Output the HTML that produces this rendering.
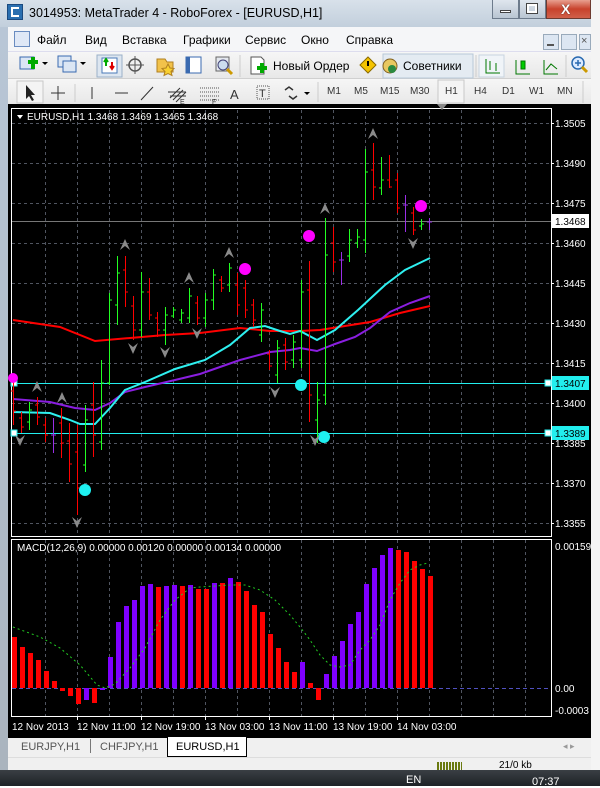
<!DOCTYPE html>
<html><head><meta charset="utf-8"><style>
*{margin:0;padding:0;box-sizing:border-box}
body{width:600px;height:786px;overflow:hidden;background:#fff;position:relative;font-family:"Liberation Sans",sans-serif}
.a{position:absolute}
.t{font-size:12px;color:#000;white-space:nowrap}
.tf{font-size:10px;color:#333;white-space:nowrap}
</style></head><body>
<!-- left window frame -->
<div class="a" style="left:0;top:0;width:591px;height:770px;background:linear-gradient(#c4d0de,#b8c6d6 30px,#aab4be)"></div>
<div class="a" style="left:0;top:0;width:591px;height:27px;background:linear-gradient(#d8e1ea,#c2cfdc)"></div>
<div class="a" style="left:7px;top:4px;width:16px;height:16px;background:#2a6fb0;border:1px solid #1a4a80"></div>
<div class="a" style="left:11px;top:7px;width:8px;height:10px;border:2px solid #fff;border-right:none"></div>
<div class="a t" style="left:29px;top:6px;font-size:12.5px">3014953: MetaTrader 4 - RoboForex - [EURUSD,H1]</div>
<div class="a" style="left:492px;top:0;width:27px;height:19px;background:linear-gradient(#dfe6ee,#b9c5d2);border:1px solid #6d7b8c;border-top:none"></div>
<div class="a" style="left:500px;top:10px;width:11px;height:3px;background:#fff;border:1px solid #444"></div>
<div class="a" style="left:519px;top:0;width:27px;height:19px;background:linear-gradient(#dfe6ee,#b9c5d2);border:1px solid #6d7b8c;border-top:none"></div>
<div class="a" style="left:527px;top:4px;width:10px;height:9px;border:2px solid #fff;outline:1px solid #444"></div>
<div class="a" style="left:546px;top:0;width:45px;height:19px;background:linear-gradient(#e8a090,#c8422c 50%,#d0604a);border:1px solid #6d3a30;border-top:none"></div>
<div class="a" style="left:561px;top:1px;color:#fff;font-size:14px;font-weight:bold;text-shadow:0 0 1px #000">X</div>
<!-- menu -->
<div class="a" style="left:8px;top:27px;width:583px;height:25px;background:#f5f6f8;border-bottom:1px solid #dde"></div>
<div class="a" style="left:14px;top:31px;width:16px;height:16px;border:1px solid #6a8cc0;background:#dfe8f6"></div>
<div class="a t" style="left:37px;top:33px">Файл</div>
<div class="a t" style="left:85px;top:33px">Вид</div>
<div class="a t" style="left:122px;top:33px">Вставка</div>
<div class="a t" style="left:183px;top:33px">Графики</div>
<div class="a t" style="left:245px;top:33px">Сервис</div>
<div class="a t" style="left:301px;top:33px">Окно</div>
<div class="a t" style="left:346px;top:33px">Справка</div>
<div class="a" style="left:543px;top:34px;width:16px;height:16px;background:#dce6f2;border:1px solid #9ab"></div>
<div class="a" style="left:561px;top:34px;width:16px;height:16px;background:#dce6f2;border:1px solid #9ab"></div>
<div class="a" style="left:579px;top:34px;width:12px;height:16px;background:#dce6f2;border:1px solid #9ab"></div>
<div class="a" style="left:547px;top:44px;width:7px;height:2px;background:#555"></div>
<div class="a" style="left:581px;top:35px;font-size:11px;color:#555">×</div>
<!-- toolbar 1 -->
<div class="a" style="left:8px;top:52px;width:583px;height:27px;background:linear-gradient(#f6f6f6,#e8e8e8);border-bottom:1px solid #d0d0d0"></div>
<div class="a" style="left:8px;top:79px;width:583px;height:25px;background:linear-gradient(#f6f6f6,#e8e8e8)"></div>
<svg class="a" style="left:0;top:52px" width="600" height="52">
<g fill="none" stroke-width="1">
<rect x="20" y="5" width="14" height="12" fill="#dbe6f4" stroke="#3a6ab0"/>
<path d="M28 10h10M33 5v12" stroke="#0a0" stroke-width="4"/>
<path d="M42 10l3 3 3-3z" fill="#000"/>
<rect x="58" y="4" width="13" height="11" fill="#dbe6f4" stroke="#3a6ab0"/>
<rect x="63" y="9" width="13" height="11" fill="#dbe6f4" stroke="#3a6ab0"/>
<path d="M80 10l3 3 3-3z" fill="#000"/>
<rect x="97" y="3" width="25" height="22" fill="#dde6f0" stroke="#9ab0c8"/>
<rect x="102" y="6" width="15" height="15" fill="#fff" stroke="#4a7ab8"/>
<path d="M106 14v-6M104 10l2-3 2 3" stroke="#0a0" stroke-width="2"/>
<path d="M112 10v6M110 14l2 3 2-3" stroke="#d00" stroke-width="2"/>
<circle cx="135" cy="13" r="6" stroke="#555" stroke-width="1.5"/>
<path d="M135 4v18M126 13h18" stroke="#555"/>
<path d="M157 7h8l2 3h6v10h-16z" fill="#f2c24a" stroke="#b08020"/>
<path d="M168 12l2 4 4 .5-3 3 1 4-4-2-4 2 1-4-3-3 4-.5z" fill="#f8d030" stroke="#b08020"/>
<rect x="186" y="5" width="15" height="16" fill="#fff" stroke="#3a6ab0"/>
<path d="M186 5h4v16h-4z" fill="#3a6ab0"/>
<rect x="216" y="5" width="13" height="14" fill="#e4e8ee" stroke="#666"/>
<circle cx="223" cy="13" r="5" fill="#cde" stroke="#447"/>
<path d="M227 17l5 5" stroke="#c90" stroke-width="3"/>
<path d="M240 3v22" stroke="#ccc"/>
<path d="M251 5h10l3 3v14h-13z" fill="#fff" stroke="#555"/>
<path d="M257 16h10M262 11v10" stroke="#0a0" stroke-width="4"/>
<path d="M368 5l8 8-8 8-8-8z" fill="#f5c400" stroke="#8a6a00"/>
<path d="M368 9v5" stroke="#000" stroke-width="2"/>
<rect x="383" y="2" width="90" height="24" fill="#e4ebf2" stroke="#b8c8d8"/>
<ellipse cx="390" cy="14" rx="7" ry="7" fill="#e8c860" stroke="#806020"/>
<circle cx="392" cy="17" r="4" fill="#2a8a40"/>
<path d="M476 3v22" stroke="#ccc"/>
<rect x="479" y="3" width="25" height="22" fill="#f0f4f8" stroke="#c8d4e0"/>
<path d="M486 7v14h14M490 9v9M496 11v8" stroke="#070"/>
<path d="M516 8v14h14" stroke="#070"/><rect x="521" y="9" width="4" height="8" fill="#0c0" stroke="#070"/>
<path d="M544 8v14h14M546 18l5-6 6 5" stroke="#070"/>
<path d="M566 3v22" stroke="#ccc"/>
<circle cx="578" cy="11" r="6" fill="#dbeaff" stroke="#2a6ab0" stroke-width="1.5"/>
<path d="M575 11h6M578 8v6" stroke="#2a6ab0" stroke-width="1.5"/>
<path d="M582 15l5 5" stroke="#c90" stroke-width="3"/>
<!-- toolbar2 -->
<rect x="17" y="29" width="26" height="22" fill="#f4f4f4" stroke="#c8c8c8"/>
<path d="M26 33v14l3-3 3 5 2-1-3-5h4z" fill="#222"/>
<path d="M51 41h14M58 34v14" stroke="#333"/>
<path d="M75 32v18" stroke="#ccc"/>
<path d="M92 35v12M115 41h13M141 48l12-13" stroke="#333"/>
<path d="M170 46l10-10M173 48l10-10M176 50l10-10M168 40h18M170 44h16" stroke="#333"/>
<text x="180" y="52" font-size="7" fill="#333" font-family="Liberation Sans">E</text>
<path d="M200 36h20M200 40h20M200 44h20M200 48h20" stroke="#555" stroke-dasharray="1,1"/>
<text x="212" y="52" font-size="7" fill="#333" font-family="Liberation Sans">F</text>
<text x="230" y="47" font-size="13" fill="#333" font-family="Liberation Sans">A</text>
<rect x="257" y="34" width="12" height="13" stroke="#555" stroke-dasharray="1,1"/>
<text x="259" y="45" font-size="11" fill="#333" font-family="Liberation Sans">T</text>
<path d="M285 38l4-3 4 3M289 44l4 3 4-3" stroke="#333" stroke-width="1.5"/>
<path d="M304 40l3 3 3-3z" fill="#000"/>
<path d="M318 30v20" stroke="#ccc"/>
<rect x="438" y="28" width="26" height="23" fill="#f4f4f4" stroke="#c8c8c8"/>
<path d="M583 29v22" stroke="#ccc"/>
</g></svg>
<div class="a t" style="left:273px;top:59px">Новый Ордер</div>
<div class="a t" style="left:403px;top:59px">Советники</div>
<div class="a tf" style="left:327px;top:86px">M1</div>
<div class="a tf" style="left:354px;top:86px">M5</div>
<div class="a tf" style="left:380px;top:86px">M15</div>
<div class="a tf" style="left:410px;top:86px">M30</div>
<div class="a tf" style="left:445px;top:86px">H1</div>
<div class="a tf" style="left:474px;top:86px">H4</div>
<div class="a tf" style="left:502px;top:86px">D1</div>
<div class="a tf" style="left:529px;top:86px">W1</div>
<div class="a tf" style="left:557px;top:86px">MN</div>
<!-- chart -->
<svg class="a" style="left:0;top:0" width="600" height="786" font-family="Liberation Sans">
<rect x="8" y="104" width="583" height="633" fill="#000"/>
<g stroke="#505560" stroke-dasharray="3,3" stroke-width="1">
<path d="M45.5 110V536M77.5 110V536M109.5 110V536M141.5 110V536M173.5 110V536M205.5 110V536M237.5 110V536M269.5 110V536M301.5 110V536M333.5 110V536M365.5 110V536M397.5 110V536M429.5 110V536M461.5 110V536M493.5 110V536M525.5 110V536"/>
<path d="M45.5 540V716M77.5 540V716M109.5 540V716M141.5 540V716M173.5 540V716M205.5 540V716M237.5 540V716M269.5 540V716M301.5 540V716M333.5 540V716M365.5 540V716M397.5 540V716M429.5 540V716M461.5 540V716M493.5 540V716M525.5 540V716"/>
<path d="M12 123.5H551M12 163.5H551M12 203.5H551M12 243.5H551M12 283.5H551M12 323.5H551M12 363.5H551M12 403.5H551M12 443.5H551M12 483.5H551M12 523.5H551"/>
</g>
<rect x="11.5" y="108.5" width="540" height="428" fill="none" stroke="#fff"/>
<rect x="11.5" y="539.5" width="540" height="177" fill="none" stroke="#fff"/>
<path d="M12 221.5H551" stroke="#777"/>
<path d="M12 383.5H551M12 433.5H551" stroke="#2ee"/>
<rect x="11" y="380" width="6" height="6" fill="#fff" stroke="#2ee"/>
<rect x="11" y="430" width="6" height="6" fill="#fff" stroke="#2ee"/>
<rect x="545" y="380" width="6" height="6" fill="#fff" stroke="#2ee"/>
<rect x="545" y="430" width="6" height="6" fill="#fff" stroke="#2ee"/>
<!-- MAs -->
<g fill="none" stroke-width="2">
<polyline stroke="#f00" points="13,320 60,327 95,341 130,338 165,335 200,333 240,328 270,331 300,331 320,330 345,326 370,322 400,313 430,306"/>
<polyline stroke="#8a1ee0" points="13,399 50,402 75,408 95,410 110,403 125,392 145,387 175,380 200,374 240,360 270,352 290,350 300,348 317,351 335,344 355,337 370,328 390,312 410,303 430,296"/>
<polyline stroke="#2ef0f0" points="13,412 50,413 70,420 80,424 95,424 110,408 125,390 145,382 175,369 205,360 230,345 250,328 265,326 280,331 290,334 300,331 317,340 335,330 358,310 385,285 405,270 430,258"/>
</g>
<!-- bars -->
<g stroke-width="1" fill="none">
<path stroke="#f00" d="M13.5 377V425M11 391h2.5M13.5 411h2.5M21.5 412V433M19 418h2.5M21.5 427h2.5M37.5 397V425M35 405h2.5M37.5 417h2.5M45.5 418V442M43 425h2.5M45.5 435h2.5M61.5 408V458M59 423h2.5M61.5 443h2.5M69.5 423V482M67 441h2.5M69.5 464h2.5M77.5 425V515M75 452h2.5M77.5 488h2.5M93.5 382V457M91 405h2.5M93.5 435h2.5M125.5 256V307M123 270h2.5M125.5 292h2.5M133.5 296V340M131 306h2.5M133.5 330h2.5M149.5 278V320M147 292h2.5M149.5 315h2.5M157.5 312V337M155 318h2.5M157.5 330h2.5M197.5 296V325M195 303h2.5M197.5 318h2.5M221.5 276V292M219 280h2.5M221.5 288h2.5M237.5 273V315M235 285h2.5M237.5 305h2.5M245.5 280V318M243 288h2.5M245.5 310h2.5M253.5 299V327M251 305h2.5M253.5 320h2.5M269.5 350V370M267 354h2.5M269.5 366h2.5M285.5 338V370M283 345h2.5M285.5 362h2.5M309.5 261V422M307 290h2.5M309.5 395h2.5M333.5 227V272M331 243h2.5M333.5 262h2.5M373.5 143V200M371 170h2.5M373.5 187h2.5M389.5 155V188M387 180h2.5M389.5 187h2.5M397.5 173V213M395 180h2.5M397.5 208h2.5M413.5 207V235M411 213h2.5M413.5 230h2.5"/>
<path stroke="#2f2" d="M29.5 402V430M27 422h2.5M29.5 410h2.5M85.5 405V472M83 465h2.5M85.5 420h2.5M101.5 360V450M99 442h2.5M101.5 383h2.5M109.5 293V385M107 383h2.5M109.5 300h2.5M117.5 256V325M115 305h2.5M117.5 273h2.5M141.5 272V337M139 330h2.5M141.5 292h2.5M165.5 307V345M163 330h2.5M165.5 315h2.5M173.5 307V318M171 316h2.5M173.5 310h2.5M181.5 309V323M179 320h2.5M181.5 313h2.5M189.5 288V323M187 318h2.5M189.5 296h2.5M205.5 293V327M203 318h2.5M205.5 300h2.5M213.5 269V310M211 300h2.5M213.5 275h2.5M229.5 263V292M227 285h2.5M229.5 268h2.5M261.5 303V342M259 335h2.5M261.5 310h2.5M277.5 340V383M275 375h2.5M277.5 348h2.5M293.5 335V368M291 360h2.5M293.5 342h2.5M301.5 280V368M299 360h2.5M301.5 292h2.5M317.5 382V443M315 420h2.5M317.5 400h2.5M325.5 218V405M323 395h2.5M325.5 255h2.5M349.5 229V262M347 256h2.5M349.5 240h2.5M357.5 229V248M355 243h2.5M357.5 237h2.5M365.5 149V253M363 240h2.5M365.5 172h2.5M381.5 157V195M379 188h2.5M381.5 180h2.5M421.5 219V230M419 226h2.5M421.5 224h2.5"/>
<path stroke="#9a2ee8" d="M53.5 418V453M51 435h5M341.5 252V285M339 260h5M405.5 195V232M403 205h5M429.5 218V230M427 222h5"/>
</g>
<!-- dots -->
<g>
<circle cx="245" cy="269" r="6" fill="#f0f"/><circle cx="309" cy="236" r="6" fill="#f0f"/><circle cx="421" cy="206" r="6" fill="#f0f"/><circle cx="13" cy="378" r="5" fill="#f0f"/>
<circle cx="85" cy="490" r="6" fill="#1ef0f0"/><circle cx="301" cy="385" r="6" fill="#1ef0f0"/><circle cx="324" cy="437" r="6" fill="#1ef0f0"/>
</g>
<!-- arrows -->
<g fill="#8a8a8a">
<path d="M120 250l5-11 5 11-5-4z"/><path d="M32 392l5-11 5 11-5-4z"/><path d="M57 403l5-11 5 11-5-4z"/><path d="M184 283l5-11 5 11-5-4z"/><path d="M224 258l5-11 5 11-5-4z"/><path d="M368 139l5-11 5 11-5-4z"/><path d="M320 214l5-11 5 11-5-4z"/>
<path d="M15 435l5 11 5-11-5 4z"/><path d="M128 343l5 11 5-11-5 4z"/><path d="M160 347l5 11 5-11-5 4z"/><path d="M192 328l5 11 5-11-5 4z"/><path d="M72 517l5 11 5-11-5 4z"/><path d="M270 387l5 11 5-11-5 4z"/><path d="M408 238l5 11 5-11-5 4z"/><path d="M310 435l5 11 5-11-5 4z"/><path d="M437 104l5 6 5-6z"/>
</g>
<!-- MACD -->
<path d="M12 688.5H551" stroke="#5050c0" stroke-dasharray="4,3"/>
<g fill="#f00">
<rect x="12" y="637" width="5" height="51"/><rect x="20" y="647" width="5" height="41"/><rect x="28" y="653" width="5" height="35"/><rect x="36" y="660" width="5" height="28"/><rect x="44" y="671" width="5" height="17"/><rect x="52" y="681" width="5" height="7"/><rect x="60" y="688" width="5" height="3"/><rect x="68" y="688" width="5" height="8"/><rect x="76" y="688" width="5" height="16"/><rect x="92" y="688" width="5" height="15"/>
<rect x="156" y="587" width="5" height="101"/><rect x="180" y="586" width="5" height="102"/><rect x="196" y="589" width="5" height="99"/><rect x="204" y="589" width="5" height="99"/><rect x="220" y="583" width="5" height="105"/><rect x="236" y="582" width="5" height="106"/><rect x="244" y="591" width="5" height="97"/><rect x="252" y="605" width="5" height="83"/><rect x="260" y="612" width="5" height="76"/><rect x="268" y="634" width="5" height="54"/><rect x="276" y="648" width="5" height="40"/><rect x="284" y="662" width="5" height="26"/><rect x="292" y="672" width="5" height="16"/><rect x="308" y="683" width="5" height="5"/><rect x="316" y="688" width="5" height="12"/>
<rect x="396" y="550" width="5" height="138"/><rect x="404" y="552" width="5" height="136"/><rect x="412" y="561" width="5" height="127"/><rect x="420" y="569" width="5" height="119"/><rect x="428" y="576" width="5" height="112"/>
</g>
<g fill="#7f00ff">
<rect x="84" y="688" width="5" height="12"/><rect x="100" y="688" width="5" height="2"/><rect x="108" y="657" width="5" height="31"/><rect x="116" y="622" width="5" height="66"/><rect x="124" y="606" width="5" height="82"/><rect x="132" y="600" width="5" height="88"/><rect x="140" y="586" width="5" height="102"/><rect x="148" y="584" width="5" height="104"/><rect x="164" y="586" width="5" height="102"/><rect x="172" y="585" width="5" height="103"/><rect x="188" y="585" width="5" height="103"/><rect x="212" y="583" width="5" height="105"/><rect x="228" y="578" width="5" height="110"/><rect x="300" y="662" width="5" height="26"/>
<rect x="324" y="674" width="5" height="14"/><rect x="332" y="656" width="5" height="32"/><rect x="340" y="641" width="5" height="47"/><rect x="348" y="624" width="5" height="64"/><rect x="356" y="612" width="5" height="76"/><rect x="364" y="584" width="5" height="104"/><rect x="372" y="568" width="5" height="120"/><rect x="380" y="555" width="5" height="133"/><rect x="388" y="548" width="5" height="140"/>
</g>
<polyline fill="none" stroke="#22cc22" stroke-dasharray="2,3" points="13,627 40,637 60,648 80,665 97,685 105,688 115,684 130,668 145,648 160,620 175,600 190,588 200,587 230,585 245,585 260,590 275,600 290,615 300,627 310,640 320,655 330,665 340,667 350,665 360,650 370,640 380,625 390,600 400,583 410,570 420,565 428,563"/>
<!-- labels -->
<g fill="#fff" font-size="10">
<path d="M17 115l3 4 3-4z" fill="#fff"/>
<text x="27" y="120">EURUSD,H1  1.3468 1.3469 1.3465 1.3468</text>
<text x="17" y="551">MACD(12,26,9) 0.00000 0.00120 0.00000 0.00134 0.00000</text>
<text x="555" y="127">1.3505</text><text x="555" y="167">1.3490</text><text x="555" y="207">1.3475</text><text x="555" y="247">1.3460</text><text x="555" y="287">1.3445</text><text x="555" y="327">1.3430</text><text x="555" y="367">1.3415</text><text x="555" y="407">1.3400</text><text x="555" y="447">1.3385</text><text x="555" y="487">1.3370</text><text x="555" y="527">1.3355</text>
<text x="555" y="550">0.00159</text><text x="555" y="692">0.00</text><text x="555" y="714">-0.0003</text>
<text x="12" y="730">12 Nov 2013</text><text x="77" y="730">12 Nov 11:00</text><text x="141" y="730">12 Nov 19:00</text><text x="205" y="730">13 Nov 03:00</text><text x="269" y="730">13 Nov 11:00</text><text x="333" y="730">13 Nov 19:00</text><text x="397" y="730">14 Nov 03:00</text>
</g>
<path d="M551 123.5h3M551 163.5h3M551 203.5h3M551 243.5h3M551 283.5h3M551 323.5h3M551 363.5h3M551 403.5h3M551 443.5h3M551 483.5h3M551 523.5h3M77.5 716v4M141.5 716v4M205.5 716v4M269.5 716v4M333.5 716v4M397.5 716v4" stroke="#fff"/>
<rect x="552" y="214" width="37" height="14" fill="#fff"/><text x="555" y="225" font-size="10" fill="#000">1.3468</text>
<rect x="552" y="376" width="37" height="14" fill="#2ee"/><text x="555" y="387" font-size="10" fill="#000">1.3407</text>
<rect x="552" y="426" width="37" height="14" fill="#2ee"/><text x="555" y="437" font-size="10" fill="#000">1.3389</text>
</svg>
<!-- tabs -->
<div class="a" style="left:8px;top:737px;width:583px;height:20px;background:#f0f0f0"></div>
<div class="a" style="left:8px;top:737px;width:583px;height:1px;background:#000"></div>
<div class="a" style="left:167px;top:737px;width:80px;height:20px;background:#fff;border:1px solid #000;border-top:none"></div>
<div class="a" style="left:21px;top:741px;font-size:11px;color:#555">EURJPY,H1</div>
<div class="a" style="left:90px;top:739px;width:1px;height:14px;background:#777"></div>
<div class="a" style="left:100px;top:741px;font-size:11px;color:#555">CHFJPY,H1</div>
<div class="a" style="left:176px;top:741px;font-size:11px;color:#000">EURUSD,H1</div>
<div class="a" style="left:563px;top:741px;font-size:9px;color:#999">◂ ▸</div>
<!-- status -->
<div class="a" style="left:8px;top:757px;width:583px;height:13px;background:#f0f0f0;border-top:1px solid #ddd"></div>
<div class="a" style="left:437px;top:762px;width:25px;height:8px;background:repeating-linear-gradient(90deg,#6a7a10 0 2px,#f0f0f0 2px 3px)"></div>
<div class="a" style="left:499px;top:760px;font-size:10px;color:#000">21/0 kb</div>
<div class="a" style="left:591px;top:0;width:9px;height:770px;background:#f4f4f4"></div>
<!-- taskbar -->
<div class="a" style="left:0;top:770px;width:600px;height:16px;background:linear-gradient(#3a3f44,#1e2226)"></div>
<div class="a" style="left:406px;top:774px;font-size:11px;color:#fff">EN</div>
<div class="a" style="left:532px;top:776px;font-size:11px;color:#fff">07:37</div>
</body></html>
